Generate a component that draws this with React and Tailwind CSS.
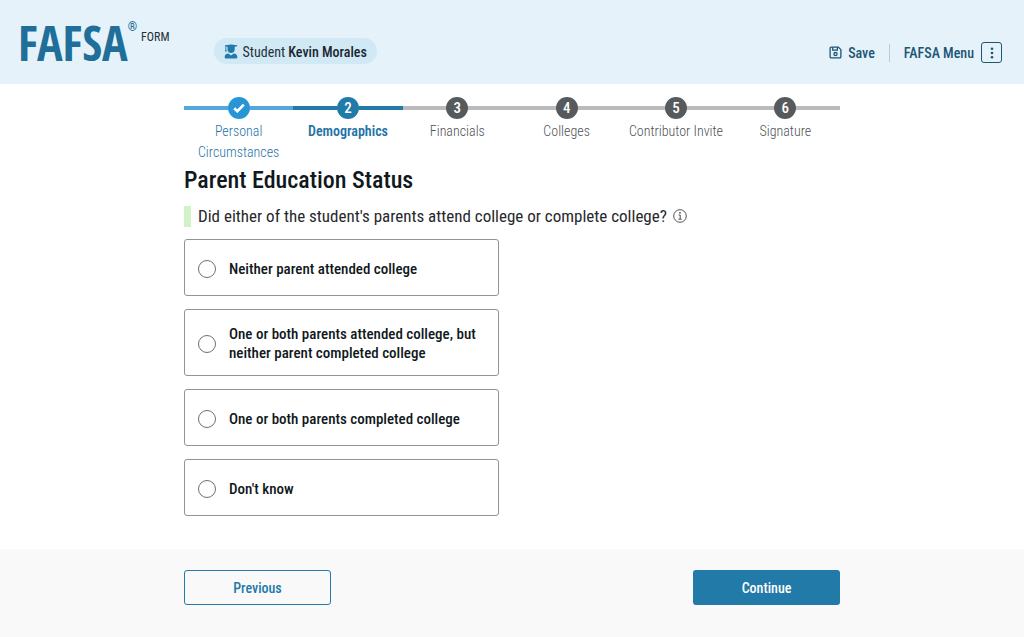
const steps = [
  { label: "Personal Circumstances", state: "done" },
  { label: "Demographics", state: "current" },
  { label: "Financials", state: "todo" },
  { label: "Colleges", state: "todo" },
  { label: "Contributor Invite", state: "todo" },
  { label: "Signature", state: "todo" },
];

const stepStyles = {
  done: { line: "bg-[#54a7dd]", dot: "bg-[#2795d6]", label: "font-light text-[#1f74a6]" },
  current: { line: "bg-[#217aa8]", dot: "bg-[#217aa8]", label: "font-semibold text-[#1f74a6]" },
  todo: { line: "bg-[#b9bbbc]", dot: "bg-[#565a5d]", label: "font-light text-[#4f5254]" },
};

const options = [
  "Neither parent attended college",
  "One or both parents attended college, but neither parent completed college",
  "One or both parents completed college",
  "Don't know",
];

function StudentIcon() {
  return (
    <svg viewBox="0 0 14 15" className="h-[15px] w-[14px] shrink-0" fill="#217aa8" aria-hidden="true">
      <path d="M1 1.300 7 0.600l6.200 0.700v1L10.700 2.800v2.700c0 2.200-1.500 3.600-3.600 3.600S3.500 7.700 3.500 5.500V2.800L2.300 2.600v3l0.500 1.800H0.900l0.500-1.800V2.400L1 2.300z" />
      <path d="M4.300 9.600 7 11.400l2.800-1.800c2.100 0.300 3.500 1.400 3.500 3.200v0.700c0 0.500-0.400 0.900-0.900 0.900H1.600c-0.500 0-0.900-0.400-0.900-0.900v-0.700c0-1.800 1.500-2.900 3.600-3.200z" />
    </svg>
  );
}

function SaveIcon() {
  return (
    <svg viewBox="0 0 14 14" className="size-[13px]" fill="none" stroke="currentColor" strokeWidth="1.400" aria-hidden="true">
      <path d="M2.400 1.200h7.700l2.700 2.700v7.700a1.200 1.200 0 0 1-1.200 1.200H2.400a1.200 1.200 0 0 1-1.200-1.200V2.400a1.200 1.200 0 0 1 1.200-1.200z" strokeLinejoin="round" />
      <path d="M4 1.400v3h5v-3" />
      <circle cx="7" cy="8.700" r="1.700" />
    </svg>
  );
}

function InfoIcon() {
  return (
    <svg viewBox="0 0 14 14" className="size-[14px]" fill="none" stroke="#3c4043" aria-hidden="true">
      <circle cx="7" cy="7" r="6.300" strokeWidth="0.900" />
      <path d="M5.700 6h1.500v4.200M5.500 10.200h3.200" strokeWidth="0.900" />
      <circle cx="7" cy="3.900" r="0.800" fill="#3c4043" stroke="none" />
    </svg>
  );
}

function Header() {
  return (
    <header className="flex h-[84px] items-start justify-between bg-[#e5f2f9] pr-[22px] pl-[18px]">
      <div className="flex items-start">
        <a href="#home" className="flex items-start pt-[19px] text-[#1f6f9a]">
          <span className="font-['Open_Sans_Condensed','Roboto_Condensed',sans-serif] text-5xl leading-[48px] font-bold">
            FAFSA
          </span>
          <span className="text-xs leading-4 font-bold">®</span>
          <span className="pt-2.5 pl-1 text-xs leading-4 text-[#22303a]">FORM</span>
        </a>
        <div className="mt-[38px] ml-11 flex h-[26px] items-center gap-[5px] rounded-full bg-[#d1e8f5] px-2.5 text-sm text-[#26333c]">
          <StudentIcon />
          <span className="pt-px">
            Student <strong className="font-medium text-[#1b2730]">Kevin Morales</strong>
          </span>
        </div>
      </div>
      <div className="flex items-center pt-[42px] text-[#1b5676]">
        <button type="button" className="flex items-center gap-1.5 text-sm font-medium">
          <SaveIcon />
          Save
        </button>
        <span className="mx-3.5 h-[18px] w-px bg-[#b9cbd6]" />
        <button type="button" className="flex items-center gap-[7px] text-sm font-medium">
          FAFSA Menu
          <span className="flex size-[21px] items-center justify-center rounded-[3px] border border-[#1b5676]">
            <svg viewBox="0 0 4 12" className="h-3 w-1" fill="currentColor" aria-hidden="true">
              <circle cx="2" cy="1.800" r="1.300" />
              <circle cx="2" cy="6" r="1.300" />
              <circle cx="2" cy="10.200" r="1.300" />
            </svg>
          </span>
        </button>
      </div>
    </header>
  );
}

function Stepper() {
  return (
    <ol className="grid grid-cols-6">
      {steps.map((step, i) => {
        const s = stepStyles[step.state];
        return (
          <li key={step.label} className="flex flex-col items-center gap-[2px]">
            <div className="flex w-full items-center">
              <span className={`h-1 flex-1 ${s.line}`} />
              <span className={`flex size-[22px] items-center justify-center rounded-full text-[15px] font-medium text-white ${s.dot}`}>
                {step.state === "done" ? (
                  <svg viewBox="0 0 12 10" className="h-2.5 w-3" fill="none" stroke="white" strokeWidth="2.700" aria-label="Completed">
                    <path d="M1.200 5.200 4.300 8.200 10.800 1.600" />
                  </svg>
                ) : (
                  i + 1
                )}
              </span>
              <span className={`h-1 flex-1 ${s.line}`} />
            </div>
            <span className={`px-1 text-center text-sm leading-[21px] ${s.label}`}>{step.label}</span>
          </li>
        );
      })}
    </ol>
  );
}

export default function App() {
  return (
    <div className="flex min-h-screen flex-col bg-white font-['Roboto_Condensed',Roboto,sans-serif] text-[#101820]">
      <Header />
      <main className="mx-auto w-full max-w-[656px] pt-[13px] pb-[33px]">
        <Stepper />
        <h1 className="pt-px text-2xl leading-8 font-medium">Parent Education Status</h1>
        <fieldset>
          <legend className="flex items-center pt-[9px] pb-3 text-[17px] leading-[22px] text-[#26292c]">
            <span className="mr-[7px] h-[21px] w-[7px] bg-[#d0f2c6]" />
            Did either of the student's parents attend college or complete college?
            <button type="button" aria-label="More information" className="ml-1.5">
              <InfoIcon />
            </button>
          </legend>
          <div className="flex max-w-[315px] flex-col gap-[13px]">
            {options.map((option) => (
              <label
                key={option}
                className="flex min-h-[57px] items-center gap-[13px] rounded-[3px] border border-[#919496] pt-[15px] pr-3.5 pb-3 pl-[13px] text-[15px] leading-[19px] font-medium"
              >
                <input
                  type="radio"
                  name="education"
                  className="size-[18px] shrink-0 appearance-none rounded-full border border-[#6d7073] bg-white checked:border-[5px] checked:border-[#217aa8]"
                />
                {option}
              </label>
            ))}
          </div>
        </fieldset>
      </main>
      <footer className="flex-1 bg-[#f9f9f9] py-[21px]">
        <div className="mx-auto flex w-full max-w-[656px] justify-between text-sm font-medium">
          <button type="button" className="h-[35px] w-[147px] rounded-[3px] border border-[#217aa8] text-[#217aa8]">
            Previous
          </button>
          <button type="button" className="h-[35px] w-[147px] rounded-[3px] bg-[#217aa8] text-white">
            Continue
          </button>
        </div>
      </footer>
    </div>
  );
}
